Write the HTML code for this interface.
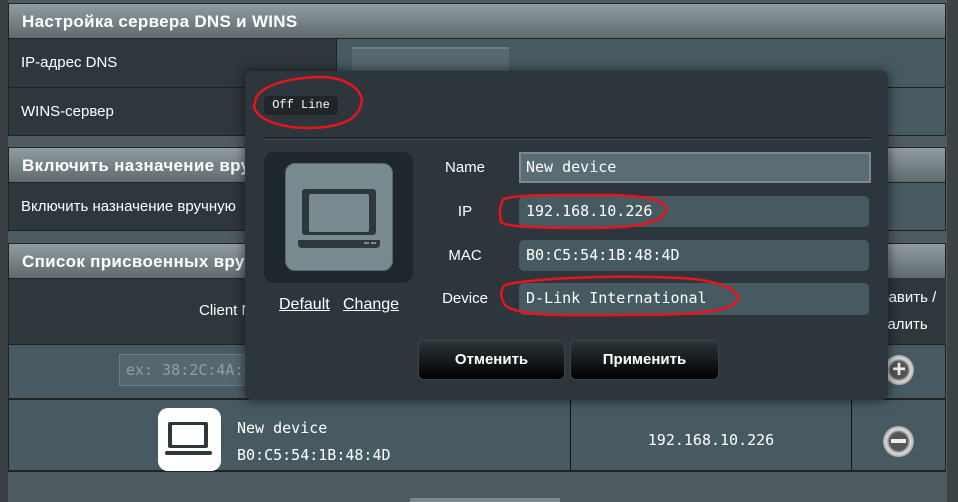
<!DOCTYPE html>
<html><head><meta charset="utf-8"><style>
*{margin:0;padding:0;box-sizing:border-box}
body{width:958px;height:502px;overflow:hidden;background:#4d5a60;font-family:"Liberation Sans",sans-serif;position:relative}
.a{position:absolute}
.hd{background:linear-gradient(#919ca1,#5f6a6f);color:#fff;font-weight:bold;font-size:17px;letter-spacing:0.3px;padding-left:13px;border:1px solid #222;}
.lc{background:#2e373c;color:#fff;font-size:15px;padding-left:12px;border:1px solid #222}
.rc{background:#475a62;border:1px solid #222}
.mono{font-family:"DejaVu Sans Mono","Liberation Mono",monospace}
.inp{background:#475a62;border-radius:5px;color:#fff;font-size:15px;padding-left:7px;line-height:31px}
.lbl{color:#fff;font-size:15px;width:70px;text-align:center}
.btn{background:linear-gradient(#2c3538,#000);border:1px solid #3a4347;border-radius:6px;color:#fff;font-weight:bold;font-size:15px;text-align:center;line-height:37px}
</style></head><body>
<div class="a" style="left:0;top:0;width:8px;height:502px;background:#3a3f42"></div>
<div class="a" style="left:947px;top:0;width:11px;height:502px;background:#3b4145"></div>
<!-- section 1 -->
<div class="a hd" style="left:8px;top:3px;width:938px;height:36px;line-height:35px">Настройка сервера DNS и WINS</div>
<div class="a lc" style="left:8px;top:38px;width:329px;height:50px;line-height:48px">IP-адрес DNS</div>
<div class="a rc" style="left:336px;top:38px;width:610px;height:50px"></div>
<div class="a" style="left:352px;top:47px;width:157px;height:26px;background:#56676e;border-top:2px solid #6c7c82"></div>
<div class="a lc" style="left:8px;top:87px;width:329px;height:49px;line-height:48px">WINS-сервер</div>
<div class="a rc" style="left:336px;top:87px;width:610px;height:49px"></div>
<!-- section 2 -->
<div class="a hd" style="left:8px;top:147px;width:938px;height:36px;line-height:35px">Включить назначение вручную</div>
<div class="a lc" style="left:8px;top:182px;width:329px;height:49px;line-height:48px">Включить назначение вручную</div>
<div class="a rc" style="left:336px;top:182px;width:610px;height:49px"></div>
<!-- section 3 -->
<div class="a hd" style="left:8px;top:243px;width:938px;height:36px;line-height:35px">Список присвоенных вручную IP-адресов</div>
<div class="a lc" style="left:8px;top:278px;width:938px;height:67px"></div>
<div class="a" style="left:199px;top:302px;color:#fff;font-size:15px">Client Name</div>
<div class="a" style="left:851px;top:278px;width:95px;height:67px;border-left:1px solid #222;color:#fff;font-size:15px;text-align:center;line-height:27px;padding-top:6px;background:#2e373c">Добавить /<br>Удалить</div>
<div class="a rc" style="left:8px;top:344px;width:938px;height:55px"></div>
<div class="a mono" style="left:119px;top:354px;width:210px;height:32px;background:#56676e;border:1px solid #6c7c82;color:#8fa0a6;font-size:15px;line-height:30px;padding-left:6px">ex: 38:2C:4A:C1:00:00</div>
<div class="a" style="left:884px;top:355px;width:30px;height:30px;border-radius:50%;background:radial-gradient(#555 40%,#ddd 55%,#999 75%);color:#eee;font-weight:bold;font-size:24px;text-align:center;line-height:29px">+</div>
<div class="a rc" style="left:8px;top:398px;width:938px;height:74px;border-width:2px 1px 2px 1px"></div>
<div class="a" style="left:570px;top:399px;width:1px;height:72px;background:#111"></div>
<div class="a" style="left:851px;top:399px;width:1px;height:72px;background:#111"></div>
<div class="a" style="left:158px;top:408px;width:63px;height:63px;background:#fff;border-radius:10px">
<svg width="63" height="63"><rect x="10" y="14" width="40" height="26" rx="2" fill="#2e373c"/><rect x="14" y="17" width="32" height="20" rx="1" fill="#fff"/><rect x="7" y="43" width="47" height="4" rx="2" fill="#2e373c"/></svg></div>
<div class="a mono" style="left:237px;top:415px;color:#fff;font-size:15px;line-height:27px">New device<br>B0:C5:54:1B:48:4D</div>
<div class="a mono" style="left:571px;top:431px;width:280px;text-align:center;color:#fff;font-size:15px">192.168.10.226</div>
<div class="a" style="left:883px;top:426px;width:31px;height:31px;border-radius:50%;background:radial-gradient(#555 40%,#ddd 55%,#999 75%)"><div style="position:absolute;left:8px;top:13px;width:15px;height:4px;background:#eee"></div></div>
<div class="a" style="left:410px;top:498px;width:150px;height:4px;background:#7b878c"></div>
<!-- modal -->
<div class="a" style="left:245px;top:71px;width:643px;height:329px;background:#2c363c;border-radius:7px;box-shadow:0 0 12px rgba(0,0,0,.6)">
<div class="a" style="left:19px;top:25px;width:74px;height:19px;background:#1f2529;border-radius:4px;color:#fff;font-family:'Liberation Mono',monospace;font-size:12px;line-height:19px;text-align:center">Off Line</div>
<div class="a" style="left:19px;top:66px;width:606px;height:3px;border-top:1px solid #161b1e;border-bottom:1px solid #3e474b"></div>
<div class="a" style="left:19px;top:81px;width:149px;height:131px;background:#1e272b;border-radius:10px"></div>
<div class="a" style="left:40px;top:92px;width:108px;height:108px;background:#7a8a91;border-radius:10px;border:1px solid #5a666b">
<svg width="108" height="108"><rect x="16" y="25" width="74" height="46" rx="3" fill="#2e373c"/><rect x="23" y="30" width="60" height="38" rx="2" fill="#7a8a91"/><path d="M12 76 H94 V80 Q94 84 90 84 H16 Q12 84 12 80Z" fill="#2e373c"/><rect x="78" y="78" width="5" height="2" fill="#7a8a91"/><rect x="85" y="78" width="5" height="2" fill="#7a8a91"/></svg></div>
<div class="a" style="left:34px;top:225px;color:#fff;font-size:16px;text-decoration:underline">Default</div>
<div class="a" style="left:98px;top:225px;color:#fff;font-size:16px;text-decoration:underline">Change</div>
<div class="a lbl" style="left:185px;top:88px">Name</div>
<div class="a lbl" style="left:185px;top:132px">IP</div>
<div class="a lbl" style="left:185px;top:176px">MAC</div>
<div class="a lbl" style="left:185px;top:219px">Device</div>
<div class="a inp mono" style="left:274px;top:81px;width:352px;height:31px;background:#5b6d74;border:2px solid #7a8a90;border-radius:0;line-height:27px;padding-left:5px">New device</div>
<div class="a inp mono" style="left:274px;top:125px;width:350px;height:31px">192.168.10.226</div>
<div class="a inp mono" style="left:274px;top:169px;width:350px;height:31px">B0:C5:54:1B:48:4D</div>
<div class="a inp mono" style="left:274px;top:212px;width:350px;height:32px">D-Link International</div>
<div class="a btn" style="left:173px;top:269px;width:147px;height:40px">Отменить</div>
<div class="a btn" style="left:325px;top:269px;width:149px;height:40px">Применить</div>
</div>
<!-- red annotations -->
<svg class="a" style="left:0;top:0" width="958" height="502"><g fill="none" stroke="#e8141c" stroke-width="2.5">
<path d="M256 98 C262 86 285 78 320 77 C345 77 360 88 362 100 C360 118 345 127 310 128 C280 128 258 120 254 107 Z"/>
<path d="M502 200 C510 194 560 195 610 195 C650 196 665 200 666 210 C664 222 640 228 590 228 C540 228 505 227 501 222 C499 212 500 206 503 200"/>
<path d="M505 285 C520 280 600 274 680 278 C720 280 738 290 738 298 C735 312 700 315 620 315 C550 316 515 315 505 305 C500 297 500 290 505 285"/>
</g></svg>
</body></html>
